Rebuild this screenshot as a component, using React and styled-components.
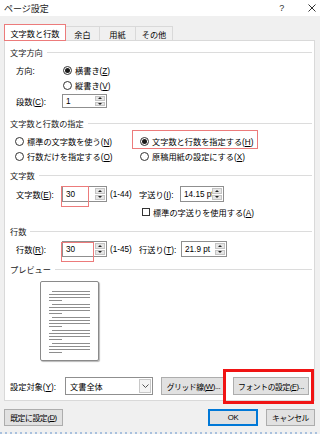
import React from 'react';
import styled, { createGlobalStyle } from 'styled-components';

const GlobalStyle = createGlobalStyle`
  html, body {
    margin: 0;
    padding: 0;
    background: #f0f0f0;
  }
  body {
    font-family: "Liberation Sans", "Noto Sans CJK JP", sans-serif;
    font-size: 8.2px;
    color: #000;
  }
`;

// ダイアログ全体
const Dialog = styled.div`
  width: 320px;
  height: 434px;
  background: #f0f0f0;
  display: flex;
  flex-direction: column;
  overflow: hidden;
`;

const TitleBar = styled.div`
  height: 16px;
  flex: none;
  background: #fff;
  display: flex;
  align-items: center;
  padding-left: 4px;
  font-size: 9px;
  color: #222;
`;

const TitleButton = styled.div`
  width: ${(p) => p.w}px;
  margin-left: ${(p) => p.ml || 0}px;
  display: flex;
  justify-content: center;
  align-items: center;
  font-size: 9px;
  color: #333;
`;

const Body = styled.div`
  padding: 8px 5px 0 4px;
  display: flex;
  flex-direction: column;
`;

const Tabs = styled.div`
  display: flex;
  align-items: flex-end;
  height: 16px;
  position: relative;
  z-index: 1;
`;

const Tab = styled.div`
  box-sizing: border-box;
  width: ${(p) => p.w}px;
  height: ${(p) => (p.active ? 17 : 14)}px;
  margin-bottom: ${(p) => (p.active ? -1 : 0)}px;
  display: flex;
  align-items: center;
  justify-content: center;
  background: ${(p) => (p.active ? '#fff' : '#f0f0f0')};
  border: 1px solid ${(p) => (p.active ? '#ec7b7b' : '#d9d9d9')};
  border-left-width: ${(p) => (p.active || p.first ? 1 : 0)}px;
  ${(p) => (p.active ? '' : 'border-bottom: none;')}
`;

const Panel = styled.div`
  box-sizing: border-box;
  height: 361px;
  background: #fff;
  border: 1px solid #d9d9d9;
  padding: 0 2px 0 5px;
  display: flex;
  flex-direction: column;
`;

const SectionHead = styled.div`
  height: 12px;
  margin-top: ${(p) => p.mt}px;
  display: flex;
  align-items: center;
  color: #1a1a1a;
  &::after {
    content: '';
    flex: 1;
    height: 1px;
    background: #dcdcdc;
    margin-left: 4px;
  }
`;

const Row = styled.div`
  height: ${(p) => p.h || 14}px;
  margin-top: ${(p) => p.mt || 0}px;
  padding-left: ${(p) => p.pl ?? 6}px;
  display: flex;
  align-items: center;
  white-space: nowrap;
`;

const Label = styled.div`
  width: ${(p) => p.w}px;
  flex: none;
  white-space: nowrap;
`;

const U = styled.span`
  text-decoration: underline;
`;

const RadioWrap = styled.div`
  display: flex;
  align-items: center;
  gap: 3px;
  position: relative;
  white-space: nowrap;
`;

const RadioCircle = styled.span`
  box-sizing: border-box;
  width: 9px;
  height: 9px;
  border-radius: 50%;
  border: 1px solid #333;
  background: #fff;
  display: flex;
  align-items: center;
  justify-content: center;
  flex: none;
  &::after {
    content: '';
    width: 5px;
    height: 5px;
    border-radius: 50%;
    background: ${(p) => (p.checked ? '#1a1a1a' : 'transparent')};
  }
`;

const CheckBox = styled.span`
  box-sizing: border-box;
  width: 8px;
  height: 8px;
  border: 1px solid #333;
  background: #fff;
  margin-right: 3px;
  flex: none;
`;

const RadioGrid = styled.div`
  display: grid;
  grid-template-columns: 125px 1fr;
  grid-auto-rows: 14px;
  row-gap: 1px;
  margin-top: 5px;
  padding-left: 5px;
  align-items: center;
`;

const Mark = styled.div`
  position: absolute;
  box-sizing: border-box;
  left: ${(p) => p.x}px;
  top: ${(p) => p.y}px;
  width: ${(p) => p.w}px;
  height: ${(p) => p.h}px;
  border: ${(p) => p.bw || 1}px solid ${(p) => p.color || '#ec7b7b'};
  pointer-events: none;
`;

const SpinBox = styled.div`
  box-sizing: border-box;
  position: relative;
  width: ${(p) => p.w || 45}px;
  height: ${(p) => p.h || 16}px;
  border: 1px solid #8f8f8f;
  background: #fff;
  display: flex;
  align-items: center;
  flex: none;
`;

const SpinValue = styled.div`
  flex: 1;
  overflow: hidden;
  white-space: nowrap;
  padding-left: 3px;
`;

const Spinner = styled.div`
  width: 10px;
  align-self: stretch;
  margin: 1px 1px 1px 0;
  display: flex;
  flex-direction: column;
  gap: 1px;
`;

const SpinHalf = styled.div`
  flex: 1;
  background: #e6e6e6;
  border: 1px solid #c4c4c4;
  display: flex;
  align-items: center;
  justify-content: center;
  &::after {
    content: '';
    border-left: 2px solid transparent;
    border-right: 2px solid transparent;
    ${(p) => (p.down ? 'border-top: 2px solid #222;' : 'border-bottom: 2px solid #222;')}
  }
`;

const Range = styled.div`
  width: 32px;
  padding-left: 3px;
  box-sizing: border-box;
  flex: none;
`;

const PreviewPage = styled.div`
  box-sizing: border-box;
  width: 59px;
  height: 80px;
  margin: 6px 0 0 30px;
  background: #fff;
  border: 1px solid #8a8a8a;
  border-radius: 2px;
  box-shadow: 1px 1px 1px #b8b8b8;
  padding: 9px 0 0 8px;
  display: flex;
  flex-direction: column;
  gap: 3px;
`;

const LineGroup = styled.div`
  display: flex;
  flex-direction: column;
  gap: 2px;
`;

const PreviewLine = styled.div`
  height: 1px;
  background: #8e8e8e;
  margin-left: ${(p) => (p.indent ? 3 : 0)}px;
  width: ${(p) => (p.short ? 13 : p.indent ? 38 : 41)}px;
`;

const Button = styled.div`
  box-sizing: border-box;
  position: relative;
  width: ${(p) => p.w}px;
  height: ${(p) => p.h || 18}px;
  flex: none;
  background: #e1e1e1;
  border: 1px solid ${(p) => (p.primary ? '#0078d7' : '#adadad')};
  box-shadow: ${(p) => (p.primary ? 'inset 0 0 0 1px #0078d7' : 'none')};
  display: flex;
  align-items: center;
  justify-content: center;
  white-space: nowrap;
  font-size: 7.8px;
  letter-spacing: -0.4px;
`;

const Select = styled.div`
  box-sizing: border-box;
  width: 88px;
  height: 18px;
  flex: none;
  border: 1px solid #8f8f8f;
  background: #fff;
  display: flex;
  align-items: center;
`;

const SelectText = styled.div`
  flex: 1;
  padding-left: 4px;
`;

const SelectArrow = styled.div`
  width: 10px;
  align-self: stretch;
  margin: 1px;
  border: 1px solid #c8c8c8;
  background: #f4f4f4;
  display: flex;
  align-items: center;
  justify-content: center;
`;

const BottomRow = styled.div`
  height: 18px;
  margin-top: 16px;
  display: flex;
  align-items: center;
  gap: 8px;
`;

const Footer = styled.div`
  margin-top: 8px;
  height: 17px;
  display: flex;
  align-items: center;
  gap: 8px;
`;

const Spacer = styled.div`
  flex: 1;
`;

const Dots = styled.div`
  margin-top: auto;
  height: 2px;
  background: repeating-linear-gradient(90deg, #a9c1de 0 2px, transparent 2px 5px);
`;

const Radio = ({ checked, children }) => (
  <RadioWrap>
    <RadioCircle checked={checked} />
    <span>{children}</span>
  </RadioWrap>
);

const Spin = ({ value, w, h, children }) => (
  <SpinBox w={w} h={h}>
    <SpinValue>{value}</SpinValue>
    <Spinner>
      <SpinHalf />
      <SpinHalf down />
    </Spinner>
    {children}
  </SpinBox>
);

const groups = [0, 1, 2, 3, 4];

const App = () => {
  return (
    <>
      <GlobalStyle />
      <Dialog>
        <TitleBar>
          <span>ページ設定</span>
          <TitleButton w={10} ml={228}>?</TitleButton>
          <TitleButton w={10} ml={20}>
            <svg width="8" height="8" viewBox="0 0 8 8">
              <path d="M0.5 0.5 L7.5 7.5 M7.5 0.5 L0.5 7.5" stroke="#333" strokeWidth="1" />
            </svg>
          </TitleButton>
        </TitleBar>

        <Body>
          <Tabs>
            <Tab w={62} active first>文字数と行数</Tab>
            <Tab w={34}>余白</Tab>
            <Tab w={36}>用紙</Tab>
            <Tab w={37}>その他</Tab>
          </Tabs>

          <Panel>
            <SectionHead mt={5}>文字方向</SectionHead>
            <Row mt={5}>
              <Label w={47}>方向:</Label>
              <Radio checked>横書き(<U>Z</U>)</Radio>
            </Row>
            <Row mt={1} pl={53}>
              <Radio>縦書き(<U>V</U>)</Radio>
            </Row>
            <Row mt={2}>
              <Label w={46}>段数(<U>C</U>):</Label>
              <Spin value="1" h={14} />
            </Row>

            <SectionHead mt={9}>文字数と行数の指定</SectionHead>
            <RadioGrid>
              <Radio>標準の文字数を使う(<U>N</U>)</Radio>
              <RadioWrap>
                <RadioCircle checked />
                <span>文字数と行数を指定する(<U>H</U>)</span>
                <Mark x={-8} y={-5} w={126} h={19} />
              </RadioWrap>
              <Radio>行数だけを指定する(<U>O</U>)</Radio>
              <Radio>原稿用紙の設定にする(<U>X</U>)</Radio>
            </RadioGrid>

            <SectionHead mt={6}>文字数</SectionHead>
            <Row h={16} mt={5}>
              <Label w={46}>文字数(<U>E</U>):</Label>
              <Spin value="30">
                <Mark x={-2} y={-1} w={28} h={21} />
              </Spin>
              <Range>(1-44)</Range>
              <Label w={41}>字送り(<U>I</U>):</Label>
              <Spin value="14.15 pt" w={44} />
            </Row>
            <Row h={12} mt={4} pl={132}>
              <CheckBox />
              <span>標準の字送りを使用する(<U>A</U>)</span>
            </Row>

            <SectionHead mt={7}>行数</SectionHead>
            <Row h={16} mt={4}>
              <Label w={46}>行数(<U>R</U>):</Label>
              <Spin value="30">
                <Mark x={-2} y={0} w={33} h={20} />
              </Spin>
              <Range>(1-45)</Range>
              <Label w={42}>行送り(<U>T</U>):</Label>
              <Spin value="21.9 pt" w={46} />
            </Row>

            <SectionHead mt={6}>プレビュー</SectionHead>
            <PreviewPage>
              {groups.map((g) => (
                <LineGroup key={g}>
                  <PreviewLine indent />
                  <PreviewLine />
                  <PreviewLine />
                  <PreviewLine short />
                </LineGroup>
              ))}
            </PreviewPage>

            <BottomRow>
              <Label w={47}>設定対象(<U>Y</U>):</Label>
              <Select>
                <SelectText>文書全体</SelectText>
                <SelectArrow>
                  <svg width="7" height="4" viewBox="0 0 7 4">
                    <path d="M0.5 0.5 L3.5 3.5 L6.5 0.5" fill="none" stroke="#555" strokeWidth="1" />
                  </svg>
                </SelectArrow>
              </Select>
              <Button w={65}>グリッド線(<U>W</U>)...</Button>
              <Button w={76} style={{ marginLeft: -1 }}>
                フォントの設定(<U>F</U>)...
                <Mark x={-11} y={-9} w={91} h={35} bw={3} color="#f01414" />
              </Button>
            </BottomRow>
          </Panel>

          <Footer>
            <Button w={59} h={17}>既定に設定(<U>D</U>)</Button>
            <Spacer />
            <Button w={50} h={17} primary>OK</Button>
            <Button w={49} h={17}>キャンセル</Button>
          </Footer>
        </Body>
        <Dots />
      </Dialog>
    </>
  );
};

export default App;
